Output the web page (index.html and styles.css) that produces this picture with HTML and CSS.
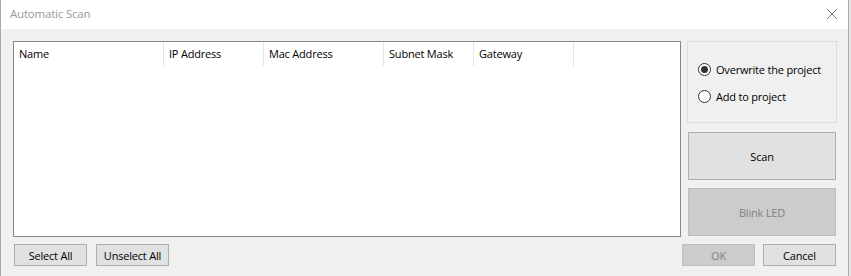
FILE: index.html
```html
<!DOCTYPE html>
<html lang="en">
<head>
    <meta charset="UTF-8">
    <meta name="viewport" content="width=device-width, initial-scale=1.0">
    <title>Automatic Scan</title>
    <link rel="stylesheet" href="styles.css">
</head>
<body>
    <div class="window">
        <div class="titlebar">
            <span class="title">Automatic Scan</span>
            <svg class="close" width="12" height="12" viewBox="0 0 12 12">
                <path d="M1 1 L11 11 M11 1 L1 11" stroke="#7a7a7a" stroke-width="1" fill="none"/>
            </svg>
        </div>

        <div class="content">
            <div class="main-row">
                <div class="list">
                    <div class="list-header">
                        <div class="col col-name">Name</div>
                        <div class="col col-ip">IP Address</div>
                        <div class="col col-mac">Mac Address</div>
                        <div class="col col-mask">Subnet Mask</div>
                        <div class="col col-gw">Gateway</div>
                    </div>
                </div>

                <div class="side">
                    <div class="group">
                        <label class="radio">
                            <span class="dot checked"></span>
                            Overwrite the project
                        </label>
                        <label class="radio">
                            <span class="dot"></span>
                            Add to project
                        </label>
                    </div>
                    <button class="btn btn-big">Scan</button>
                    <button class="btn btn-big disabled">Blink LED</button>
                </div>
            </div>

            <div class="bottom-row">
                <div class="btn-group">
                    <button class="btn btn-small">Select All</button>
                    <button class="btn btn-small">Unselect All</button>
                </div>
                <div class="btn-group">
                    <button class="btn btn-small disabled">OK</button>
                    <button class="btn btn-small">Cancel</button>
                </div>
            </div>
        </div>
    </div>
</body>
</html>
```

FILE: styles.css
```css
*{
    padding: 0;
    margin: 0;
    box-sizing: border-box;
}

body{
    width: 851px;
    height: 276px;
    overflow: hidden;
    background: #e6e6e6;
    font-family: "Open Sans", "Liberation Sans", sans-serif;
    font-size: 11px;
    letter-spacing: -0.2px;
    color: #000;
}

.window {
    width: 849px;
    height: 276px;
    border-left: 1px solid #a8a8a8;
    border-right: 1px solid #a8a8a8;
    background: #f0f0f0;
}

.titlebar {
    height: 29px;
    background: #fff;
    display: flex;
    align-items: center;
    justify-content: space-between;
    padding: 0 10px 0 9px;
}

.title {
    color: #999;
    font-size: 11.5px;
    margin-top: -2px;
}

.close {
    margin-top: -1px;
}

.content {
    padding: 12px 11px 0 12px;
}

.main-row {
    display: flex;
    gap: 6px;
}

.list {
    width: 668px;
    height: 196px;
    background: #fff;
    border: 1px solid #828790;
}

.list-header {
    display: flex;
    height: 24px;
}

.col {
    height: 24px;
    line-height: 24px;
    padding-left: 5px;
    border-right: 1px solid #e5e5e5;
    white-space: nowrap;
}

.col-name { width: 150px; }
.col-ip { width: 100px; }
.col-mac { width: 120px; }
.col-mask { width: 90px; }
.col-gw { width: 100px; }

.side {
    width: 150px;
    display: flex;
    flex-direction: column;
}

.group {
    height: 82px;
    border: 1px solid #dcdcdc;
    padding: 21px 0 0 10px;
    margin-bottom: 9px;
}

.radio {
    display: flex;
    align-items: center;
    gap: 5px;
    height: 13px;
    margin-bottom: 14px;
}

.dot {
    width: 13px;
    height: 13px;
    border: 1px solid #333;
    border-radius: 50%;
    background: #fff;
    display: flex;
    align-items: center;
    justify-content: center;
}

.dot.checked::after {
    content: "";
    width: 7px;
    height: 7px;
    border-radius: 50%;
    background: #333;
}

.btn {
    font-family: inherit;
    font-size: inherit;
    letter-spacing: inherit;
    color: #000;
    background: #e1e1e1;
    border: 1px solid #adadad;
    outline: none;
}

.btn.disabled {
    background: #cccccc;
    border-color: #bfbfbf;
    color: #838383;
}

.btn-big {
    height: 48px;
    margin: 0 1px 8px 1px;
}

.btn-big:last-child {
    margin-bottom: 0;
}

.bottom-row {
    display: flex;
    justify-content: space-between;
    margin-top: 7px;
    padding: 0 0 0 1px;
}

.btn-group {
    display: flex;
    gap: 9px;
}

.btn-group + .btn-group {
    gap: 8px;
    margin-right: 1px;
}

.btn-small {
    width: 73px;
    height: 22px;
}
```
